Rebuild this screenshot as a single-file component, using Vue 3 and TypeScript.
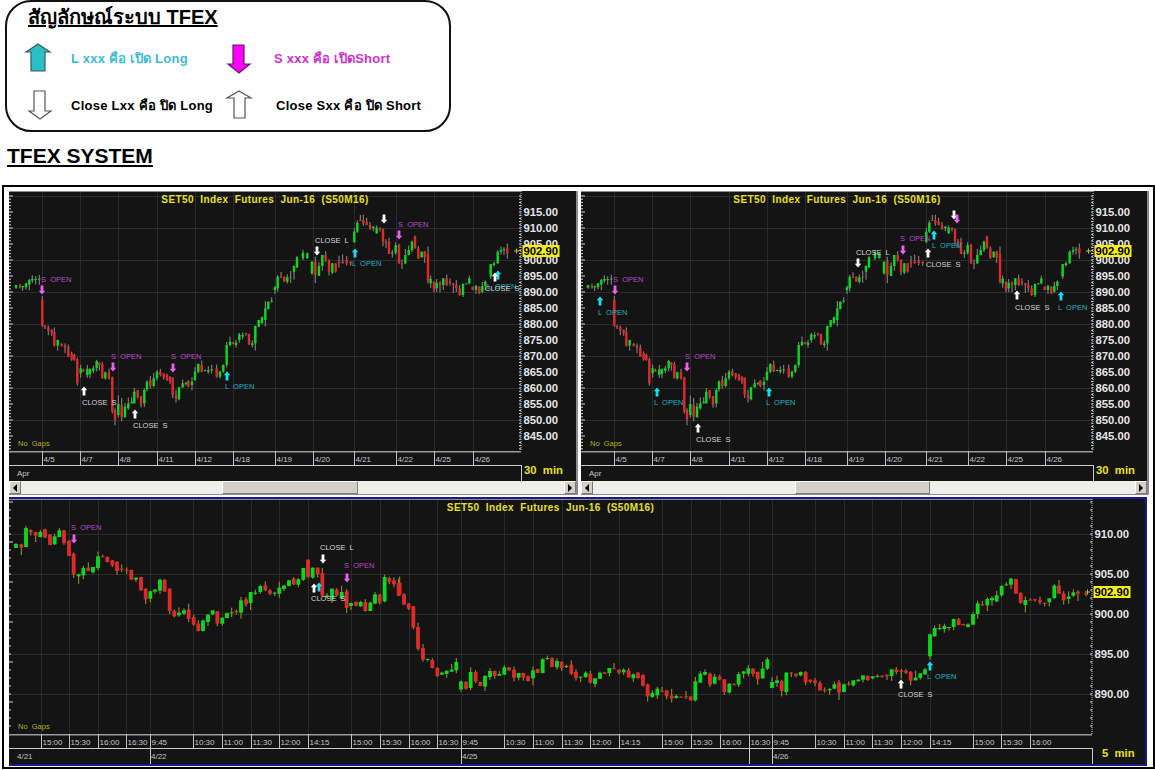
<template>
  <div class="page">
    <section class="legend">
      <h1 class="legend-title">สัญลักษณ์ระบบ TFEX</h1>
      <div class="legend-grid">
        <template v-for="item in legendItems" :key="item.text">
          <svg class="legend-icon" width="30" height="34" viewBox="0 0 30 34">
            <path :d="item.path" :fill="item.fill" :stroke="item.stroke" stroke-width="1.2" />
          </svg>
          <span class="legend-text" :class="item.cls">{{ item.text }}</span>
        </template>
      </div>
    </section>

    <h2 class="system-title">TFEX SYSTEM</h2>

    <div class="frame">
      <div
        v-for="chart in charts"
        :key="chart.id"
        class="chart"
        :class="{ wide: chart.wide }"
      >
        <svg class="chart-svg" :width="chart.w" :height="chart.h" :viewBox="`0 0 ${chart.w} ${chart.h}`">
          <rect :width="chart.w" :height="chart.h" fill="#141414" />

          <!-- grid -->
          <line
            v-for="t in chart.ticks"
            :key="'v' + t.x"
            class="crisp"
            :x1="t.x"
            :x2="t.x"
            y1="0"
            :y2="chart.plotH"
            stroke="#2b2b2b"
          />
          <line
            v-for="g in chart.gridY"
            :key="'h' + g"
            class="crisp"
            x1="0"
            :x2="chart.plotW"
            :y1="g"
            :y2="g"
            stroke="#2b2b2b"
          />
          <path :d="chart.minorTicks" stroke="#d8d8d8" fill="none" />
          <line x1="0" :x2="chart.plotW" y1="0.5" y2="0.5" stroke="#8c8c8c" />

          <!-- candles -->
          <path :d="chart.wicks" :stroke="chart.wickColor" fill="none" />
          <rect
            v-for="(c, i) in chart.candles"
            :key="i"
            :x="c.x - chart.bodyW / 2"
            :y="c.top"
            :width="chart.bodyW"
            :height="c.height"
            :fill="c.up ? '#0bd920' : '#e02a2a'"
          />

          <!-- signals -->
          <g v-for="(m, i) in chart.markers" :key="'m' + i">
            <path :d="m.path" :fill="m.color" />
          </g>
          <text
            v-for="(l, i) in chart.labels"
            :key="'l' + i"
            class="signal-label"
            :x="l.x"
            :y="l.y"
            :fill="l.color"
          >{{ l.text }}</text>

          <text class="chart-title" :x="chart.plotW / 2" y="11.5" text-anchor="middle">{{ chartTitle }}</text>
          <text class="no-gaps" x="9" :y="chart.plotH - 5">{{ noGaps }}</text>

          <!-- time axis -->
          <rect x="0" :y="chart.plotH" :width="chart.plotW" height="1.5" fill="#9a9a9a" />
          <rect x="0" :y="chart.plotH + 14" :width="chart.plotW" height="1" fill="#c8c8c8" />
          <g v-for="t in chart.ticks" :key="'t' + t.x">
            <line class="crisp" :x1="t.x" :x2="t.x" :y1="chart.plotH" :y2="chart.plotH + 14" stroke="#c0c0c0" />
            <text class="time-label" :x="t.x + 1.5" :y="chart.plotH + 11">{{ t.label }}</text>
          </g>
          <g v-for="d in chart.days" :key="d.label">
            <line v-if="d.line" class="crisp" :x1="d.x - 1" :x2="d.x - 1" :y1="chart.plotH + 14" :y2="chart.h" stroke="#c8c8c8" />
            <text class="time-label" :x="d.x" :y="chart.plotH + 25">{{ d.label }}</text>
          </g>

          <!-- price axis -->
          <line :x1="chart.plotW" :x2="chart.plotW" y1="0" :y2="chart.plotH" stroke="#d0d0d0" stroke-dasharray="1 1" />
          <line :x1="chart.plotW + 0.5" :x2="chart.plotW + 0.5" :y1="chart.plotH + 14" :y2="chart.h" stroke="#c8c8c8" />
          <text
            v-for="p in chart.prices"
            :key="p.label"
            class="price-label"
            :x="chart.plotW + 2.5"
            :y="p.y + 4"
          >{{ p.label }}</text>
          <path :d="`M${chart.plotW - 7} ${chart.last}h5M${chart.plotW - 4.5} ${chart.last - 2.5}v5`" stroke="#c8b820" />
          <rect :x="chart.plotW + 1.5" :y="chart.last - 6" width="37" height="12" fill="#f6ee10" />
          <text class="price-label last" :x="chart.plotW + 2.5" :y="chart.last + 4">902.90</text>
          <text class="period" :x="chart.periodX" :y="chart.h - 7">{{ chart.period }}</text>
        </svg>

        <div v-if="chart.scroll" class="scrollbar">
          <button class="sb-btn" type="button"><span class="sb-arrow left"></span></button>
          <div class="sb-gap" :style="{ width: chart.scroll.before + 'px' }"></div>
          <div class="sb-thumb" :style="{ width: chart.scroll.thumb + 'px' }"></div>
          <div class="sb-rest"></div>
          <button class="sb-btn" type="button"><span class="sb-arrow right"></span></button>
        </div>
      </div>
    </div>
  </div>
</template>

<script setup lang="ts">
type Row = [number, number, number];
type Signal = { kind: 'S' | 'L' | 'CS' | 'CL'; tx?: number; ty?: number; ax: number; ay: number };

const chartTitle = 'SET50  Index  Futures  Jun-16  (S50M16)';
const noGaps = 'No  Gaps';

const legendItems = [
  { text: 'L xxx คือ เปิด Long', cls: 'cyan', fill: '#29bfc6', stroke: '#3a5a5c', path: 'M15 2L27 10H22V29H8V10H3Z' },
  { text: 'S xxx คือ เปิดShort', cls: 'pink', fill: '#ff00ff', stroke: '#552255', path: 'M9 3H20V22H26L15 31L4 22H9Z' },
  { text: 'Close Lxx คือ ปิด Long', cls: 'plain', fill: '#fff', stroke: '#555', path: 'M11 2H22V22H28L17 30L6 22H11Z' },
  { text: 'Close Sxx คือ ปิด Short', cls: 'plain far', fill: '#fff', stroke: '#555', path: 'M15 2L27 9H21V29H10V9H3Z' },
];

// candles as read off the picture: x, open y, close y, in 3x units from a panel origin
const chunk = (ox: number, oy: number, rows: Row[]) =>
  rows.map(([x, a, b]) => ({ x: ox + x / 3, o: oy + a / 3, c: oy + b / 3 }));

const dailyRows = [
  ...chunk(-9, -11, [
    [48, 323, 315], [60, 318, 322], [68, 322, 318], [78, 322, 310], [88, 314, 300], [97, 302, 297], [107, 300, 297], [118, 297, 296],
    [127, 360, 437], [135, 437, 442], [145, 442, 452], [155, 450, 460], [163, 457, 497], [173, 497, 480], [185, 492, 497], [195, 497, 503],
  ]),
  ...chunk(-9, 149, [
    [205, 22, 50], [215, 40, 58], [223, 45, 60], [232, 58, 130], [242, 100, 85], [250, 90, 95], [262, 105, 87], [270, 102, 88], [280, 92, 85], [290, 85, 63], [298, 68, 75],
    [307, 72, 115], [316, 115, 97], [327, 97, 115], [337, 112, 215], [345, 210, 238], [355, 225, 192], [365, 195, 232], [375, 232, 200], [385, 205, 190], [395, 190, 185],
    [403, 190, 155], [413, 150, 172], [423, 168, 195], [433, 190, 150], [441, 148, 125], [451, 120, 138], [461, 138, 115], [471, 115, 95], [481, 95, 105], [491, 100, 112],
    [501, 105, 120], [510, 110, 125], [518, 113, 165], [528, 165, 175], [537, 178, 142], [548, 142, 130], [558, 130, 128], [565, 122, 138], [576, 135, 125], [585, 120, 95],
    [595, 95, 72], [605, 75, 95], [615, 93, 90], [625, 95, 90], [635, 90, 88], [650, 85, 110], [660, 110, 95], [670, 95, 75],
  ]),
  ...chunk(-9, -11, [
    [680, 555, 495], [690, 495, 485], [699, 487, 492], [708, 495, 488], [718, 480, 463], [728, 470, 465], [738, 460, 463], [747, 462, 492], [757, 495, 490], [766, 490, 438],
    [776, 440, 420], [786, 430, 412], [796, 420, 385], [805, 387, 365], [815, 365, 362], [825, 330, 322], [833, 325, 290], [843, 290, 292], [853, 290, 305], [862, 305, 292],
    [872, 290, 292], [882, 275, 258], [891, 262, 232],
  ]),
  ...chunk(291, -11, [
    [9, 235, 218], [22, 235, 220], [36, 280, 245], [46, 245, 285], [57, 288, 258], [67, 258, 225], [77, 225, 240], [87, 240, 275], [97, 278, 250], [107, 250, 275],
    [117, 245, 250], [128, 245, 250], [140, 240, 250], [152, 245, 250], [163, 187, 155], [172, 155, 128], [181, 120, 122], [190, 120, 130], [200, 125, 135], [210, 135, 145],
    [220, 145, 140], [230, 160, 143], [240, 143, 148], [249, 148, 185], [258, 185, 190], [267, 185, 222], [277, 220, 218], [287, 218, 195], [297, 195, 250], [306, 250, 250],
    [316, 250, 225], [326, 225, 210], [336, 210, 185], [345, 170, 205], [355, 205, 235], [365, 232, 215], [374, 215, 232], [384, 222, 305], [392, 310, 296], [402, 305, 330],
    [410, 325, 308], [420, 310, 315], [430, 315, 295], [440, 295, 315], [450, 305, 310], [460, 310, 315], [469, 315, 325], [479, 325, 345], [489, 345, 312], [499, 312, 310],
    [508, 310, 295], [518, 320, 330], [528, 330, 318], [538, 320, 340], [547, 335, 318], [556, 318, 305], [572, 290, 252], [582, 255, 250], [593, 250, 215], [603, 215, 210],
    [612, 210, 208], [622, 205, 220],
  ]),
];

const fiveMinRows = [
  ...chunk(-9, -2, [
    [48, 153, 141], [64, 142, 152], [78, 150, 93], [92, 99, 107], [107, 105, 116], [121, 120, 105], [135, 97, 122], [150, 113, 144], [164, 142, 118], [178, 120, 100],
    [192, 100, 138], [207, 132, 177], [221, 170, 232], [236, 238, 232], [250, 235, 213], [265, 212, 222], [279, 226, 210], [294, 213, 178], [308, 178, 180], [322, 180, 195],
    [337, 190, 205], [351, 195, 222], [365, 215, 218], [380, 218, 221], [394, 219, 248], [408, 248, 242], [423, 240, 280], [437, 275, 307], [451, 305, 283], [465, 284, 278],
    [480, 281, 248], [494, 248, 284], [509, 275, 342], [523, 342, 358], [537, 355, 347], [552, 350, 340], [566, 337, 366], [581, 360, 383], [595, 380, 402], [609, 402, 370],
    [624, 375, 353], [638, 352, 340], [652, 343, 380], [667, 380, 362], [681, 363, 348], [695, 349, 346], [709, 342, 346], [723, 347, 310], [738, 307, 322], [752, 318, 285],
    [766, 289, 287], [781, 285, 267], [796, 265, 280], [810, 280, 290], [824, 289, 287], [838, 290, 272], [852, 276, 266], [867, 267, 250], [881, 245, 262], [895, 263, 247],
    [910, 248, 213], [924, 188, 240], [938, 242, 212], [953, 212, 232], [967, 228, 296], [981, 300, 295], [996, 305, 275], [1010, 278, 295], [1025, 305, 285], [1040, 283, 333],
    [1053, 327, 318], [1068, 315, 326], [1082, 328, 315], [1096, 315, 342], [1111, 342, 317], [1125, 320, 292], [1139, 293, 317], [1154, 313, 240], [1168, 243, 255], [1182, 250, 262], [1196, 258, 297],
  ]),
  ...chunk(391, 63, [
    [-1, 62, 97], [12, 97, 128], [26, 125, 140], [40, 133, 197], [54, 195, 260], [69, 258, 293], [83, 293, 291], [97, 294, 318], [112, 318, 342], [126, 338, 332], [140, 336, 326],
    [155, 329, 323], [169, 325, 300], [183, 382, 358], [198, 360, 380], [212, 378, 330], [227, 330, 358], [241, 360, 372], [255, 374, 342], [270, 345, 327], [284, 327, 342],
    [298, 341, 336], [313, 338, 316], [327, 316, 325], [342, 323, 347], [356, 347, 333], [370, 333, 347], [384, 343, 357], [399, 349, 325], [413, 321, 333], [428, 333, 292],
    [442, 290, 288], [456, 289, 315], [471, 316, 297], [485, 300, 318], [499, 315, 312], [514, 308, 336], [528, 330, 348], [542, 346, 344], [557, 345, 332], [571, 335, 362],
    [585, 366, 349], [600, 350, 332], [614, 331, 335], [628, 333, 318], [642, 319, 320], [657, 323, 332], [671, 331, 323], [686, 325, 346], [700, 349, 337], [714, 332, 348],
    [729, 338, 371], [743, 367, 403], [757, 405, 393], [772, 400, 380], [786, 386, 386], [800, 385, 403], [815, 401, 410], [829, 408, 402], [843, 404, 405], [858, 403, 404],
    [872, 403, 415], [886, 415, 358], [901, 362, 335], [915, 338, 330], [930, 335, 368], [944, 365, 344], [959, 344, 353], [973, 352, 390], [988, 392, 365], [1002, 367, 367],
    [1016, 368, 336], [1031, 335, 328], [1045, 335, 319], [1059, 320, 336], [1073, 330, 352], [1088, 349, 320], [1102, 320, 292],
  ]),
  ...chunk(751, -2, [
    [36, 573, 555], [51, 558, 550], [65, 552, 582], [79, 585, 527], [94, 527, 527], [108, 530, 536], [122, 535, 525], [137, 525, 556], [151, 548, 554], [165, 550, 558],
    [180, 558, 580], [194, 578, 578], [209, 580, 576], [223, 575, 562], [237, 556, 586], [252, 585, 562], [266, 560, 560], [280, 565, 550], [295, 553, 548], [309, 548, 535],
    [323, 537, 549], [338, 544, 538], [352, 540, 537], [366, 536, 536], [381, 533, 538], [395, 537, 517], [409, 517, 525], [424, 520, 525], [438, 521, 527], [452, 525, 551],
    [467, 550, 542], [481, 543, 529], [495, 532, 517], [510, 478, 412], [524, 418, 393], [539, 395, 393], [553, 396, 387], [567, 392, 390], [581, 390, 366], [596, 367, 384],
    [610, 381, 385], [624, 390, 382], [639, 383, 351], [653, 351, 319], [667, 322, 322], [682, 325, 306], [696, 310, 303], [710, 313, 295], [725, 295, 267], [739, 265, 262],
    [753, 263, 245], [768, 246, 290], [782, 288, 318], [796, 324, 309], [811, 308, 308], [825, 307, 307], [840, 310, 316], [854, 318, 318], [868, 316, 304], [883, 303, 266],
    [897, 266, 290], [911, 289, 310], [926, 306, 298], [940, 296, 286], [954, 284, 290], [978, 289, 289],
  ]),
];

// small repeatable noise so wicks stay the same between renders
function noise(seed: number) {
  let s = seed;
  return () => {
    s = (s * 16807) % 2147483647;
    return (s % 1000) / 1000;
  };
}

function buildCandles(rows: { x: number; o: number; c: number }[], reach: number, seed: number) {
  const rand = noise(seed);
  let wicks = '';
  const candles = rows.map((r) => {
    const top = Math.min(r.o, r.c);
    const bottom = Math.max(r.o, r.c);
    const hi = top - rand() * rand() * reach;
    const lo = bottom + rand() * rand() * reach;
    wicks += `M${r.x.toFixed(1)} ${hi.toFixed(1)}V${lo.toFixed(1)}`;
    return { x: r.x, top, height: Math.max(bottom - top, 1), up: r.c < r.o };
  });
  return { candles, wicks };
}

const COLORS = { S: '#f060f0', L: '#19def0', CS: '#ffffff', CL: '#ffffff' };
const LABEL_COLORS = { S: '#b848c8', L: '#22b0c0', CS: '#d4d4d4', CL: '#d4d4d4' };
const LABEL_TEXT = { S: 'S  OPEN', L: 'L  OPEN', CS: 'CLOSE  S', CL: 'CLOSE  L' };

function arrow(x: number, y: number, up: boolean) {
  const d = up ? 1 : -1;
  return `M${x} ${y - 4.5 * d}L${x + 3.2} ${y - 0.8 * d}H${x + 1.4}V${y + 4.5 * d}H${x - 1.4}V${y - 0.8 * d}H${x - 3.2}Z`;
}

function buildSignals(list: Signal[]) {
  return {
    markers: list.map((s) => ({
      path: arrow(s.ax, s.ay, s.kind === 'L' || s.kind === 'CS'),
      color: COLORS[s.kind],
    })),
    labels: list
      .filter((s) => s.tx !== undefined)
      .map((s) => ({ x: s.tx, y: s.ty, color: LABEL_COLORS[s.kind], text: LABEL_TEXT[s.kind] })),
  };
}

const dayTicks = [
  [33, '4/5'], [71, '4/7'], [109, '4/8'], [148, '4/11'], [186, '4/12'], [224, '4/18'],
  [266, '4/19'], [304, '4/20'], [345, '4/21'], [387, '4/22'], [425, '4/25'], [464, '4/26'],
].map(([x, label]) => ({ x: x as number, label: label as string }));

const minuteSet = ['15:00', '15:30', '16:00', '16:30', '9:45', '10:30', '11:00', '11:30', '12:00', '14:15'];
const minuteX = [32, 60, 89, 117, 141, 184, 213, 242, 270, 299, 342, 371, 400, 428, 452, 495, 524, 553, 581, 610, 653, 682, 711, 740, 763, 806, 835, 863, 892, 921, 964, 992, 1021];
const minuteTicks = minuteX.map((x, i) => ({ x, label: minuteSet[i % 10] }));

function topChart(id: string, signals: Signal[], seed: number, before: number, thumb: number) {
  const plotH = 260;
  const plotW = 512;
  const prices: { label: string; y: number }[] = [];
  for (let p = 915, y = 21; p >= 845; p -= 5, y += 16) prices.push({ label: p.toFixed(2), y });
  const gridY = [5, 37, 69, 101, 133, 165, 197, 229];
  let minorTicks = '';
  for (let y = 5; y < plotH; y += 3.2) {
    minorTicks += `M0 ${y.toFixed(1)}h${Math.round((y - 5) / 3.2) % 5 === 0 ? 4 : 2}`;
    minorTicks += `M${plotW} ${y.toFixed(1)}h-2`;
  }
  return {
    id,
    wide: false,
    w: 567,
    h: 290,
    plotW,
    plotH,
    bodyW: 2.4,
    wickColor: '#8c8c8c',
    ticks: dayTicks,
    gridY,
    minorTicks,
    days: [{ x: 8, label: 'Apr', line: false }],
    prices,
    last: 60,
    period: '30  min',
    periodX: plotW + 3,
    scroll: { before, thumb },
    ...buildCandles(dailyRows, 9, seed),
    ...buildSignals(signals),
  };
}

function bottomChart() {
  const plotH = 235;
  const plotW = 1083;
  const prices = [
    { label: '910.00', y: 35 },
    { label: '905.00', y: 75 },
    { label: '900.00', y: 115 },
    { label: '895.00', y: 155 },
    { label: '890.00', y: 195 },
  ];
  let minorTicks = '';
  for (let y = 3; y < plotH; y += 8) {
    minorTicks += `M0 ${y}h${(y - 3) % 40 === 0 ? 4 : 2}M${plotW} ${y}h-2`;
  }
  const signals: Signal[] = [
    { kind: 'S', tx: 62, ty: 31, ax: 65, ay: 40 },
    { kind: 'CL', tx: 311, ty: 51, ax: 314, ay: 60 },
    { kind: 'CS', tx: 302, ty: 102, ax: 305, ay: 89 },
    { kind: 'L', ax: 310, ay: 88 },
    { kind: 'S', tx: 335, ty: 69, ax: 338, ay: 79 },
    { kind: 'CS', tx: 889, ty: 198, ax: 892, ay: 185 },
    { kind: 'L', tx: 918, ty: 180, ax: 921, ay: 167 },
  ];
  return {
    id: 'five',
    wide: true,
    w: 1138,
    h: 265,
    plotW,
    plotH,
    bodyW: 3.8,
    wickColor: '#a8942c',
    ticks: minuteTicks,
    gridY: [35, 75, 115, 155, 195],
    minorTicks,
    days: [
      { x: 8, label: '4/21', line: false },
      { x: 142, label: '4/22', line: true },
      { x: 453, label: '4/25', line: true },
      { x: 741, label: '', line: true },
      { x: 764, label: '4/26', line: true },
    ],
    prices,
    last: 93,
    period: '5  min',
    periodX: plotW + 10,
    scroll: null,
    ...buildCandles(fiveMinRows, 8, 77),
    ...buildSignals(signals),
  };
}

const leftSignals: Signal[] = [
  { kind: 'S', tx: 32, ty: 91, ax: 33, ay: 99 },
  { kind: 'CS', tx: 73, ty: 214, ax: 75, ay: 200 },
  { kind: 'S', tx: 102, ty: 168, ax: 104, ay: 176 },
  { kind: 'CS', tx: 124, ty: 237, ax: 126, ay: 223 },
  { kind: 'S', tx: 162, ty: 168, ax: 164, ay: 177 },
  { kind: 'L', tx: 216, ty: 198, ax: 218, ay: 185 },
  { kind: 'CL', tx: 306, ty: 52, ax: 308, ay: 60 },
  { kind: 'L', tx: 343, ty: 75, ax: 346, ay: 62 },
  { kind: 'CL', ax: 375, ay: 28 },
  { kind: 'S', tx: 389, ty: 36, ax: 390, ay: 44 },
  { kind: 'L', tx: 478, ty: 98, ax: 489, ay: 84 },
  { kind: 'CS', tx: 476, ty: 100, ax: 486, ay: 86 },
];

const rightSignals: Signal[] = [
  { kind: 'S', tx: 32, ty: 91, ax: 34, ay: 99 },
  { kind: 'L', tx: 17, ty: 124, ax: 19, ay: 110 },
  { kind: 'S', tx: 104, ty: 168, ax: 106, ay: 176 },
  { kind: 'L', tx: 73, ty: 214, ax: 76, ay: 201 },
  { kind: 'CS', tx: 115, ty: 251, ax: 117, ay: 237 },
  { kind: 'L', tx: 185, ty: 214, ax: 188, ay: 201 },
  { kind: 'CL', tx: 275, ty: 64, ax: 277, ay: 72 },
  { kind: 'S', tx: 319, ty: 50, ax: 322, ay: 59 },
  { kind: 'CS', tx: 345, ty: 76, ax: 347, ay: 62 },
  { kind: 'L', tx: 351, ty: 57, ax: 353, ay: 44 },
  { kind: 'CL', ax: 373, ay: 24 },
  { kind: 'S', ax: 376, ay: 28 },
  { kind: 'CS', tx: 434, ty: 119, ax: 436, ay: 104 },
  { kind: 'L', tx: 477, ty: 119, ax: 480, ay: 105 },
];

const charts = [
  topChart('left', leftSignals, 31, 201, 136),
  topChart('right', rightSignals, 31, 202, 135),
  bottomChart(),
];
</script>

<style scoped>
.page {
  width: 1155px;
  height: 770px;
  overflow: hidden;
  font-family: "Liberation Sans", Arial, sans-serif;
  color: #000;
  background: #fff;
}
.legend {
  box-sizing: border-box;
  width: 446px;
  height: 132px;
  margin-left: 5px;
  padding: 3px 0 0 21px;
  border: 2px solid #111;
  border-radius: 26px;
}
.legend-title {
  margin: 0;
  font-size: 20px;
  line-height: 24px;
  font-weight: 700;
  text-decoration: underline;
}
.legend-grid {
  display: grid;
  grid-template-columns: 30px 171px 30px 1fr;
  grid-auto-rows: 47px;
  align-items: center;
  margin-top: 6px;
  margin-left: -5px;
}
.legend-icon {
  display: block;
}
.legend-text {
  padding-left: 18px;
  font-size: 13px;
  font-weight: 700;
  letter-spacing: 0.25px;
  white-space: nowrap;
}
.cyan {
  color: #3cbcd8;
}
.pink {
  color: #d030d0;
  padding-left: 20px;
}
.plain {
  color: #000;
}
.far {
  padding-left: 22px;
}
.system-title {
  margin: 12px 0 17px 7px;
  font-size: 21px;
  line-height: 24px;
  font-weight: 700;
  text-decoration: underline;
}
.frame {
  box-sizing: border-box;
  display: grid;
  grid-template-columns: 567px 566px;
  column-gap: 5px;
  row-gap: 2px;
  align-content: start;
  width: 1153px;
  height: 584px;
  margin-left: 2px;
  padding: 4px 6px 0 5px;
  border: 2px solid #000;
  background: #fff;
}
.chart {
  overflow: hidden;
  background: #141414;
}
.chart:not(.wide) {
  box-shadow: 2px 0 #8c8c8c;
}
.chart.wide {
  grid-column: 1 / -1;
  border: solid #1a1a8c;
  border-width: 2px 2px 2px 0;
}
.chart-svg {
  display: block;
}
.crisp {
  shape-rendering: crispEdges;
}
.chart-title {
  font-size: 10px;
  font-weight: 700;
  letter-spacing: 0.4px;
  fill: #e8e020;
  white-space: pre;
}
.no-gaps {
  font-size: 7.5px;
  fill: #b0b020;
  white-space: pre;
}
.signal-label {
  font-size: 7.5px;
  white-space: pre;
}
.time-label {
  font-size: 8px;
  fill: #c4c4c4;
}
.price-label {
  font-size: 11.3px;
  font-weight: 700;
  fill: #e4e4e4;
}
.price-label.last {
  fill: #000;
}
.period {
  font-size: 11.3px;
  font-weight: 700;
  fill: #e8e020;
  white-space: pre;
}
.scrollbar {
  display: flex;
  box-sizing: border-box;
  height: 14px;
  background: #efefea;
  border-bottom: 1px solid #8c8c8c;
}
.sb-btn {
  flex: none;
  box-sizing: border-box;
  width: 12px;
  height: 13px;
  margin: 0;
  padding: 0;
  display: flex;
  align-items: center;
  justify-content: center;
  background: #d4d0c8;
  border: 1px solid;
  border-color: #fff #777 #777 #fff;
}
.sb-arrow {
  display: block;
  width: 0;
  height: 0;
  border-style: solid;
  border-color: transparent;
  border-width: 4px 0;
}
.sb-arrow.left {
  border-right: 4px solid #000;
}
.sb-arrow.right {
  border-left: 4px solid #000;
}
.sb-thumb {
  flex: none;
  background: #d4d0c8;
  border: 1px solid;
  border-color: #fff #808080 #808080 #fff;
  box-sizing: border-box;
}
.sb-gap {
  flex: none;
}
.sb-rest {
  flex: 1;
}
</style>

<style>
html,
body {
  margin: 0;
  background: #fff;
}
</style>
